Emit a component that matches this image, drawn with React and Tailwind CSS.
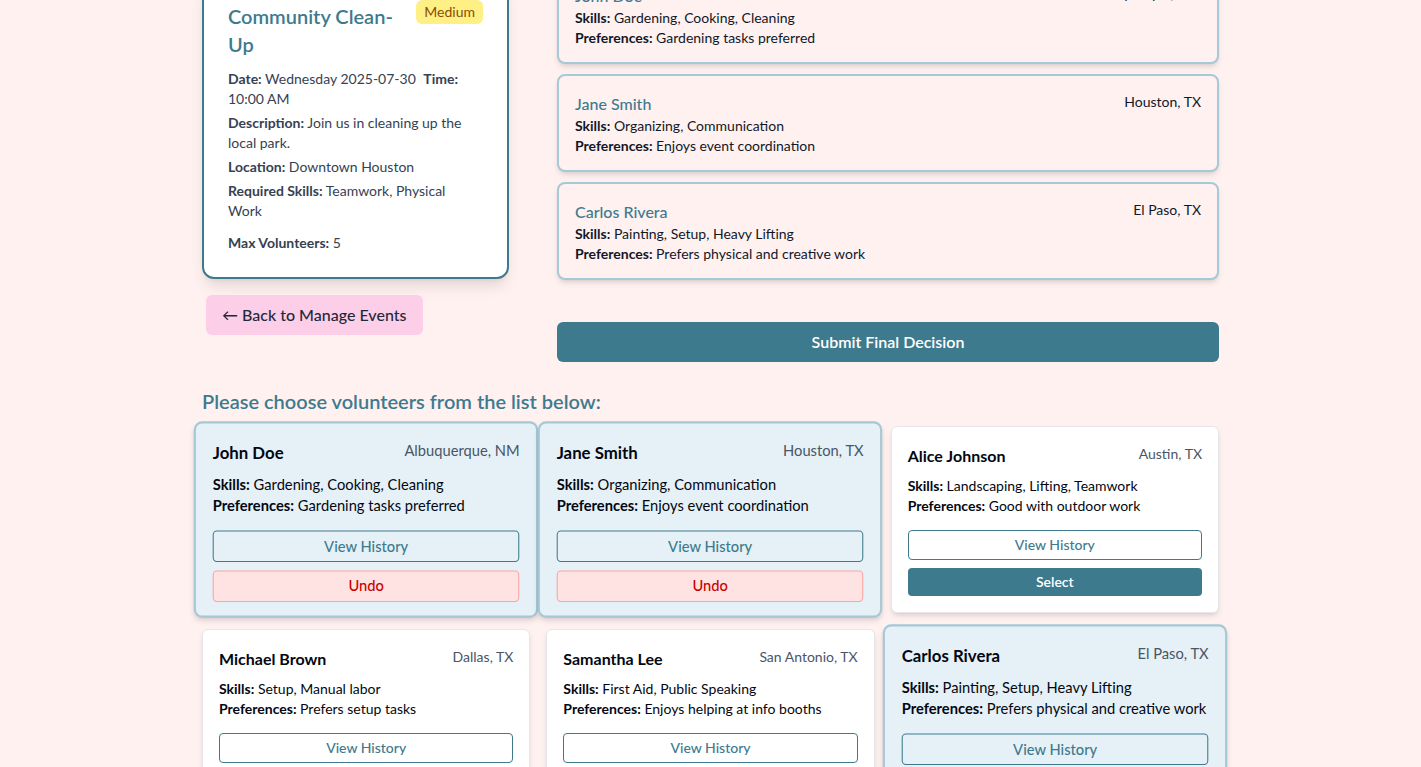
import React from 'react'

const TEAL = '#3e7a8e'

const chosen = [
  { name: 'John Doe', location: 'Albuquerque, NM', skills: 'Gardening, Cooking, Cleaning', prefs: 'Gardening tasks preferred' },
  { name: 'Jane Smith', location: 'Houston, TX', skills: 'Organizing, Communication', prefs: 'Enjoys event coordination' },
  { name: 'Carlos Rivera', location: 'El Paso, TX', skills: 'Painting, Setup, Heavy Lifting', prefs: 'Prefers physical and creative work' },
]

const volunteers = [
  { name: 'John Doe', location: 'Albuquerque, NM', skills: 'Gardening, Cooking, Cleaning', prefs: 'Gardening tasks preferred', selected: true },
  { name: 'Jane Smith', location: 'Houston, TX', skills: 'Organizing, Communication', prefs: 'Enjoys event coordination', selected: true },
  { name: 'Alice Johnson', location: 'Austin, TX', skills: 'Landscaping, Lifting, Teamwork', prefs: 'Good with outdoor work', selected: false },
  { name: 'Michael Brown', location: 'Dallas, TX', skills: 'Setup, Manual labor', prefs: 'Prefers setup tasks', selected: false },
  { name: 'Samantha Lee', location: 'San Antonio, TX', skills: 'First Aid, Public Speaking', prefs: 'Enjoys helping at info booths', selected: false },
  { name: 'Carlos Rivera', location: 'El Paso, TX', skills: 'Painting, Setup, Heavy Lifting', prefs: 'Prefers physical and creative work', selected: true },
]

function EventCard() {
  return (
    <div className="bg-white border-2 border-[#3e7a8e] rounded-xl shadow-lg p-6">
      <div className="flex items-start justify-between gap-4">
        <h2 className="text-xl leading-7 font-semibold text-[#3e7a8e]">Community Clean-Up</h2>
        <span className="shrink-0 -mt-0.5 bg-yellow-200 text-yellow-800 text-sm px-2 py-0.5 rounded-md">Medium</span>
      </div>
      <div className="mt-[11px] pr-1 text-sm leading-5 text-gray-700 space-y-1">
        <p>
          <span className="font-bold">Date:</span> Wednesday 2025-07-30 <span className="font-bold ml-1">Time:</span> 10:00 AM
        </p>
        <p>
          <span className="font-bold">Description:</span> Join us in cleaning up the local park.
        </p>
        <p>
          <span className="font-bold">Location:</span> Downtown Houston
        </p>
        <p>
          <span className="font-bold">Required Skills:</span> Teamwork, Physical Work
        </p>
        <p className="!mt-3">
          <span className="font-bold">Max Volunteers:</span> 5
        </p>
      </div>
    </div>
  )
}

function ChosenCard({ v }) {
  return (
    <div className="bg-[#fff1f0] border-2 border-[#a5c9d6] rounded-lg shadow-md px-4 pt-4 pb-[14px]">
      <div className="flex items-start justify-between">
        <span className="text-base leading-6 font-medium text-[#3e7a8e]">{v.name}</span>
        <span className="text-sm leading-5 text-gray-900">{v.location}</span>
      </div>
      <p className="text-sm leading-5 text-gray-900"><span className="font-bold">Skills:</span> {v.skills}</p>
      <p className="text-sm leading-5 text-gray-900"><span className="font-bold">Preferences:</span> {v.prefs}</p>
    </div>
  )
}

function VolunteerCard({ v }) {
  return (
    <div
      className={
        v.selected
          ? 'scale-105 bg-[#e5f1f6] border-2 border-[#a5c8d5] rounded-lg shadow-md px-4 pt-4 pb-[13px]'
          : 'bg-white border border-gray-200 rounded-md shadow-md px-4 pt-[17px] pb-4'
      }
    >
      <div className="flex items-start justify-between mb-2">
        <span className="text-base leading-6 font-bold text-gray-950">{v.name}</span>
        <span className="text-sm leading-5 text-gray-600">{v.location}</span>
      </div>
      <p className="text-sm leading-5 text-gray-950"><span className="font-bold">Skills:</span> {v.skills}</p>
      <p className="text-sm leading-5 text-gray-950"><span className="font-bold">Preferences:</span> {v.prefs}</p>
      <div className="mt-[14px] space-y-2">
        <button
          className={`w-full border border-[#3e7a8e] text-[#3e7a8e] rounded text-sm leading-5 py-1 font-medium ${
            v.selected ? 'bg-transparent' : 'bg-white'
          }`}
        >
          View History
        </button>
        {v.selected ? (
          <button className="w-full bg-red-100 border border-red-300 text-[#cc0000] rounded text-sm leading-5 py-1 font-medium">
            Undo
          </button>
        ) : (
          <button className="w-full bg-[#3e7a8e] text-white rounded text-sm leading-5 py-1 font-semibold">
            Select
          </button>
        )}
      </div>
    </div>
  )
}

export default function App() {
  return (
    <div className="h-screen overflow-hidden bg-[#fff1f0] font-['Lato','Noto_Sans',sans-serif]">
      <div className="w-[1017px] mx-auto">
        <div className="flex items-start gap-12">
          {/* event details */}
          <div className="w-[307px] shrink-0 -mt-[24px]">
            <EventCard />
            <button className="mt-4 ml-1 bg-pink-200 text-gray-800 font-medium text-base leading-6 px-4 py-2 rounded-md">
              ← Back to Manage Events
            </button>
          </div>

          {/* chosen volunteers */}
          <div className="flex-1 -mt-[34px]">
            <div className="space-y-2.5">
              {chosen.map((v) => (
                <ChosenCard key={v.name} v={v} />
              ))}
            </div>
            <button
              className="mt-[42px] w-full text-white font-semibold text-base leading-6 py-2 rounded-md"
              style={{ backgroundColor: TEAL }}
            >
              Submit Final Decision
            </button>
          </div>
        </div>

        <h3 className="mt-[25px] mb-[11px] text-xl leading-7 font-semibold text-[#3e7a8e]">
          Please choose volunteers from the list below:
        </h3>

        <div className="grid grid-cols-3 gap-4">
          {volunteers.map((v) => (
            <VolunteerCard key={v.name} v={v} />
          ))}
        </div>
      </div>
    </div>
  )
}
